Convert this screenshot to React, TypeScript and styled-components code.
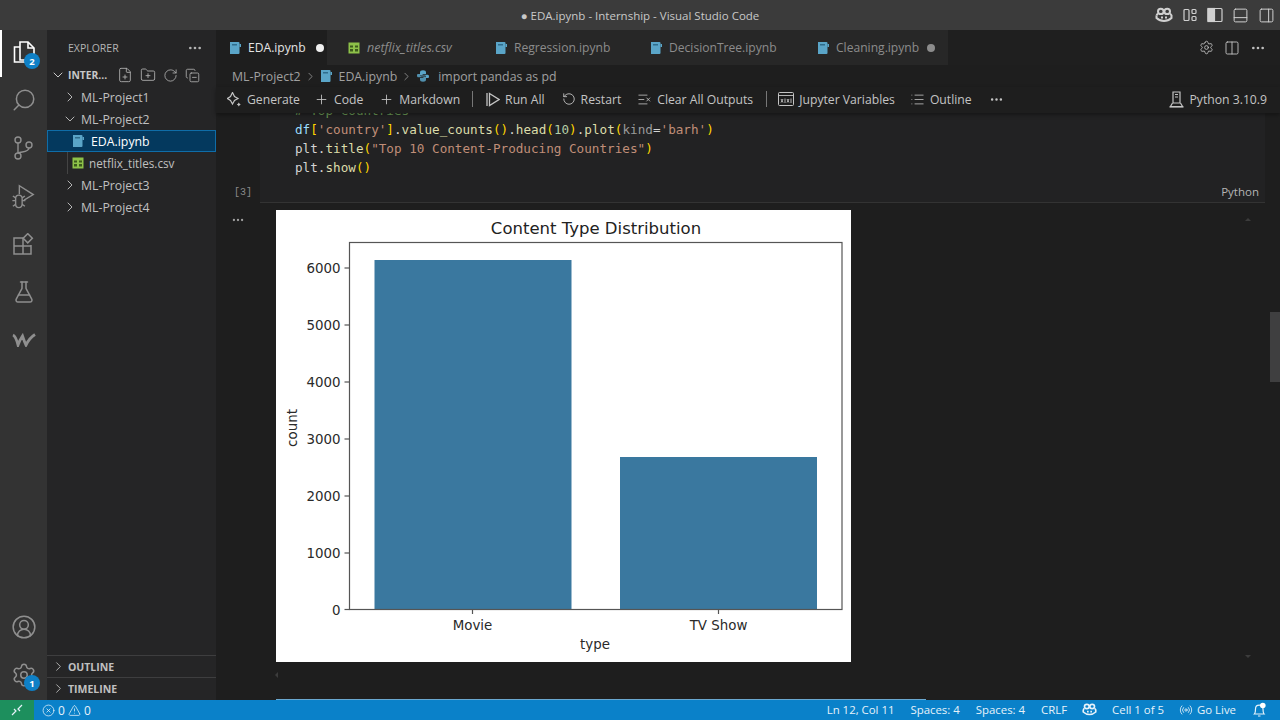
import React from 'react';
import styled, { createGlobalStyle } from 'styled-components';
import {
  ChevronDown,
  ChevronRight,
  CircleUserRound,
  Columns2,
  CopyMinus,
  FilePlus,
  FlaskConical,
  FolderPlus,
  List,
  ListX,
  MoreHorizontal,
  PanelBottom,
  PanelRight,
  Plus,
  Radio,
  RotateCcw,
  RotateCw,
  Search,
  Settings,
  TriangleAlert,
  CircleX,
} from 'lucide-react';

const GlobalStyle = createGlobalStyle`
  html, body {
    margin: 0;
    padding: 0;
    background: #1e1e1e;
    overflow: hidden;
  }
  * {
    box-sizing: border-box;
  }
`;

const Window = styled.div`
  width: 1280px;
  height: 720px;
  display: flex;
  flex-direction: column;
  font-family: 'Open Sans', 'Noto Sans', sans-serif;
  font-size: 12.3px;
  color: #ccc;
  overflow: hidden;
`;

const TitleBar = styled.div`
  height: 30px;
  flex-shrink: 0;
  background: #3b3b3b;
  position: relative;
  display: flex;
  align-items: center;
  justify-content: flex-end;
  gap: 7.5px;
  padding-right: 5px;
  color: #d0d0d0;
`;

const TitleText = styled.div`
  position: absolute;
  left: 0;
  right: 0;
  text-align: center;
  font-size: 11.5px;
  color: #c8c8c8;
`;

const TitleIcon = styled.span`
  width: 18px;
  height: 18px;
  display: flex;
  align-items: center;
  justify-content: center;
`;

const Main = styled.div`
  flex: 1;
  display: flex;
  min-height: 0;
`;

const ActivityBar = styled.div`
  width: 47px;
  flex-shrink: 0;
  background: #333333;
  display: flex;
  flex-direction: column;
  gap: 4px;
  padding-bottom: 3px;
  color: #8f8f8f;
`;

const ActivitySpacer = styled.div`
  flex: 1;
`;

const ActivityItem = styled.div<{ $active?: boolean }>`
  height: 44px;
  position: relative;
  display: flex;
  align-items: center;
  justify-content: center;
  color: ${(p) => (p.$active ? '#ffffff' : 'inherit')};

  &::before {
    content: '';
    display: ${(p) => (p.$active ? 'block' : 'none')};
    position: absolute;
    left: 0;
    top: 0;
    bottom: -3px;
    width: 2px;
    background: #fff;
  }
`;

const Badge = styled.span`
  position: absolute;
  left: 24px;
  top: 23px;
  width: 16px;
  height: 16px;
  border-radius: 50%;
  background: #0f80c6;
  color: #fff;
  font-size: 9.5px;
  font-weight: 700;
  display: flex;
  align-items: center;
  justify-content: center;
`;

const BottomBadge = styled(Badge)`
  top: 22px;
`;

const Sidebar = styled.div`
  width: 169px;
  flex-shrink: 0;
  background: #252526;
  display: flex;
  flex-direction: column;
  padding-bottom: 1px;
`;

const SidebarHeader = styled.div`
  height: 35px;
  display: flex;
  align-items: center;
  justify-content: space-between;
  padding: 0 13px 0 21px;
  font-size: 10.5px;
  color: #b4b4b4;
`;

const WorkspaceRow = styled.div`
  height: 22px;
  margin-top: -1px;
  display: flex;
  align-items: center;
  padding-left: 3px;
  color: #c8c8c8;
`;

const WorkspaceName = styled.span`
  font-size: 10.3px;
  font-weight: 700;
  margin-left: 2px;
  width: 49px;
`;

const WorkspaceActions = styled.div`
  display: flex;
  align-items: center;
  gap: 7px;
  color: #b4b4b4;
`;

const TreeRow = styled.div<{ $selected?: boolean; $indent: number; $gap?: number }>`
  height: 22px;
  display: flex;
  align-items: center;
  position: relative;
  padding-left: ${(p) => p.$indent}px;
  gap: ${(p) => p.$gap ?? 3}px;
  color: ${(p) => (p.$selected ? '#ffffff' : '#c0c0c0')};
  background: ${(p) => (p.$selected ? '#04395e' : 'transparent')};
  border: 1px solid ${(p) => (p.$selected ? '#0f6da8' : 'transparent')};
  border-width: ${(p) => (p.$selected ? 1 : 0)}px;
`;

const TreeFileName = styled.span<{ $narrow?: boolean }>`
  font-size: ${(p) => (p.$narrow ? 11.7 : 12.3)}px;
`;

const IndentGuide = styled.span`
  position: absolute;
  left: 20px;
  top: 0;
  bottom: 0;
  width: 1px;
  background: #444;
`;

const SidebarFill = styled.div`
  flex: 1;
`;

const SectionHeader = styled.div`
  height: 22px;
  border-top: 1px solid #3e3e3f;
  display: flex;
  align-items: center;
  gap: 2px;
  padding-left: 4px;
  font-size: 10.5px;
  font-weight: 700;
  color: #c0c0c0;
`;

const Editor = styled.div`
  flex: 1;
  min-width: 0;
  background: #1e1e1e;
  display: flex;
  flex-direction: column;
  position: relative;
`;

const TabStrip = styled.div`
  height: 35px;
  flex-shrink: 0;
  display: flex;
  background: #1f1f1f;
`;

const Tab = styled.div<{ $active?: boolean; $width: number; $pad: number }>`
  width: ${(p) => p.$width}px;
  padding-left: ${(p) => p.$pad}px;
  display: flex;
  align-items: center;
  gap: 7px;
  background: ${(p) => (p.$active ? '#1e1e1e' : '#272727')};
  color: ${(p) => (p.$active ? '#e4e4e4' : '#8c8c8c')};
`;

const TabLabel = styled.span<{ $italic?: boolean }>`
  font-size: ${(p) => (p.$italic ? 12.5 : 12.1)}px;
  font-style: ${(p) => (p.$italic ? 'italic' : 'normal')};
`;

const Dirty = styled.span<{ $active?: boolean }>`
  width: 8px;
  height: 8px;
  margin-left: ${(p) => (p.$active ? 3 : 1)}px;
  border-radius: 50%;
  background: ${(p) => (p.$active ? '#f0f0f0' : '#8c8c8c')};
`;

const TabActions = styled.div`
  margin-left: auto;
  display: flex;
  align-items: center;
  gap: 10px;
  padding-right: 14px;
  color: #c0c0c0;
`;

const Breadcrumb = styled.div`
  height: 22px;
  flex-shrink: 0;
  display: flex;
  align-items: center;
  gap: 3px;
  padding-left: 16px;
  color: #a0a0a0;
  background: #1e1e1e;
`;

const CrumbText = styled.span<{ $left?: number }>`
  margin-left: ${(p) => p.$left ?? 0}px;
  font-size: 12.3px;
`;

const Toolbar = styled.div`
  height: 26px;
  flex-shrink: 0;
  display: flex;
  align-items: center;
  padding: 0 13px 2px 11px;
  font-size: 12.2px;
  background: #1e1e1e;
  color: #c4c4c4;
  box-shadow: 0 2px 4px rgba(0, 0, 0, 0.35);
  position: relative;
  z-index: 1;
`;

const ToolItem = styled.div<{ $left?: number }>`
  display: flex;
  align-items: center;
  gap: 5px;
  margin-left: ${(p) => p.$left ?? 0}px;
  white-space: nowrap;
`;

const ToolSeparator = styled.span<{ $left: number }>`
  width: 1px;
  height: 16px;
  margin-left: ${(p) => p.$left}px;
  background: #777;
`;

const ToolSpacer = styled.div`
  flex: 1;
`;

const Notebook = styled.div`
  flex: 1;
  min-height: 0;
  position: relative;
  display: flex;
  flex-direction: column;
`;

const CellRow = styled.div`
  height: 90px;
  flex-shrink: 0;
  display: flex;
`;

const CellGutter = styled.div`
  width: 44px;
  flex-shrink: 0;
  display: flex;
  align-items: flex-end;
  justify-content: flex-end;
  padding: 0 8px 5px 0;
  font-family: 'Liberation Mono', monospace;
  font-size: 10px;
  color: #8a8a8a;
`;

const CellBody = styled.div`
  width: 1005px;
  flex-shrink: 0;
  background: #222223;
  border-bottom: 1px solid #333;
  position: relative;
  display: flex;
  flex-direction: column;
  justify-content: flex-end;
  overflow: hidden;
  padding: 0 0 25px 35px;
`;

const CodeLine = styled.div`
  height: 19px;
  flex-shrink: 0;
  line-height: 19px;
  font-family: 'DejaVu Sans Mono', 'Liberation Mono', monospace;
  font-size: 12.65px;
  white-space: pre;
  color: #d4d4d4;
`;

const Tok = styled.span<{ $c: string }>`
  color: ${(p) => p.$c};
`;

const CellLanguage = styled.span`
  position: absolute;
  right: 6px;
  bottom: 3px;
  font-size: 11.5px;
  color: #b4b4b4;
`;

const OutputRow = styled.div`
  display: flex;
  padding-top: 7px;
`;

const OutputGutter = styled.div`
  width: 60px;
  flex-shrink: 0;
  padding: 3px 0 0 15px;
  color: #a0a0a0;
  display: flex;
  align-items: flex-start;
`;

const ChartFrame = styled.div`
  width: 575px;
  height: 452px;
  background: #fff;
`;

const ChartSvg = styled.svg`
  display: block;
  font-family: 'DejaVu Sans', sans-serif;
`;

const ScrollSlider = styled.div`
  position: absolute;
  right: 0;
  top: 199px;
  width: 10px;
  height: 70px;
  background: #3f3f40;
`;

const ScrollArrow = styled.span<{ $dir: 'up' | 'down' | 'left' }>`
  position: absolute;
  width: 0;
  height: 0;
  ${(p) =>
    p.$dir === 'left'
      ? `left: 59px; bottom: 22px; border-top: 3px solid transparent; border-bottom: 3px solid transparent; border-right: 3px solid #3c3c3c;`
      : p.$dir === 'up'
        ? `right: 29px; top: 105px; border-left: 3px solid transparent; border-right: 3px solid transparent; border-bottom: 3px solid #3c3c3c;`
        : `right: 29px; bottom: 42px; border-left: 3px solid transparent; border-right: 3px solid transparent; border-top: 3px solid #3c3c3c;`}
`;

const HorizontalThumb = styled.div`
  position: absolute;
  left: 60px;
  bottom: 0;
  width: 650px;
  height: 1px;
  background: #6aa8d0;
`;

const StatusBar = styled.div`
  height: 20px;
  flex-shrink: 0;
  background: #0a81c9;
  color: #e6f2fa;
  display: flex;
  align-items: center;
  font-size: 11.4px;
  padding-right: 13px;
`;

const RemoteButton = styled.div`
  width: 34px;
  height: 100%;
  background: #1d8f5d;
  display: flex;
  align-items: center;
  justify-content: center;
`;

const StatusGroup = styled.div`
  display: flex;
  align-items: center;
  gap: 3px;
  margin-left: 8px;
  font-size: 12px;
`;

const StatusSpacer = styled.div`
  flex: 1;
`;

const StatusItem = styled.span<{ $left: number }>`
  display: flex;
  align-items: center;
  gap: 4px;
  margin: -1px 0 0 ${(p) => p.$left}px;
  white-space: nowrap;
`;

const NotebookIcon = () => (
  <svg width="12" height="14" viewBox="0 0 12 14">
    <path d="M1 1h8.5a1 1 0 0 1 1 1v10a1 1 0 0 1-1 1H1z" fill="#5aa5c8" />
    <rect x="10.5" y="3" width="1.5" height="3" fill="#5aa5c8" />
    <rect x="3" y="3" width="5" height="1.5" fill="#2f6d8c" />
  </svg>
);

const CsvIcon = () => (
  <svg width="12" height="12" viewBox="0 0 12 12">
    <rect x="0.5" y="0.5" width="11" height="11" fill="#8dc149" />
    <path d="M2 3.5h3v2H2zM7 3.5h3v2H7zM2 7h3v2.5H2zM7 7h3v2.5H7z" fill="#3c5a1c" />
  </svg>
);

const PythonIcon = () => (
  <svg width="14" height="14" viewBox="0 0 14 14" fill="#5aa5c8">
    <path d="M4 6V3.2C4 2 5 1.2 7 1.2S10 2 10 3.2V5H6.6V5.7H11.6C12.6 5.7 13 6.4 13 7.5S12.6 9 11.6 9H10V8C10 7 9.4 6.6 8.5 6.6H5.2C4.5 6.6 4 6.4 4 6Z" />
    <path d="M10 8V10.8C10 12 9 12.8 7 12.8S4 12 4 10.8V9H7.4V8.3H2.4C1.4 8.3 1 7.6 1 6.5S1.4 5 2.4 5H4V6C4 7 4.6 7.4 5.5 7.4H8.8C9.5 7.4 10 7.6 10 8Z" opacity="0.85" />
  </svg>
);

const CopilotIcon = ({ size = 18 }: { size?: number }) => (
  <svg width={size} height={size} viewBox="0 0 18 18" fill="none" stroke="currentColor" strokeWidth="2">
    <path d="M1.5 9.5V12c2.2 2 5 3 7.5 3s5.3-1 7.5-3V9.5C16 8.5 15.5 8 15 8" />
    <path d="M3 8c-.7 0-1.2.5-1.5 1.5" />
    <ellipse cx="5.8" cy="5.4" rx="2.8" ry="2.6" />
    <ellipse cx="12.2" cy="5.4" rx="2.8" ry="2.6" />
    <path d="M7 10.5v2M11 10.5v2" />
  </svg>
);

const LayoutIcon = () => (
  <svg width="16" height="16" viewBox="0 0 16 16" fill="none" stroke="currentColor" strokeWidth="1.2">
    <rect x="2" y="2.5" width="5" height="11" rx="1" />
    <rect x="10" y="2.5" width="4" height="4" rx="1" />
    <rect x="10" y="9.5" width="4" height="4" rx="1" />
  </svg>
);

const SidePanelIcon = () => (
  <svg width="16" height="16" viewBox="0 0 16 16" fill="none" stroke="currentColor" strokeWidth="1.2">
    <rect x="1" y="1.5" width="14" height="13" rx="1" />
    <rect x="1" y="1.5" width="6.5" height="13" fill="currentColor" />
  </svg>
);

const SparkleIcon = () => (
  <svg width="15" height="15" viewBox="0 0 15 15" fill="none" stroke="currentColor" strokeWidth="1.2">
    <path d="M5.5 .5 7.500 4.500l3.500 2-3.500 2-2 3.500-2-3.500L.5 6.500l3-2z" />
    <path d="M11.8 10.500l.8 1.200 1.200.8-1.200.8-.8 1.200-.8-1.200-1.200-.8 1.200-.8z" fill="currentColor" stroke="none" />
  </svg>
);

const RunAllIcon = () => (
  <svg width="14" height="15" viewBox="0 0 14 15" fill="none" stroke="currentColor" strokeWidth="1.3">
    <path d="M1 1v13" />
    <path d="M3.5 1.5 13 7.5l-9.500 6z" />
  </svg>
);

const FilesIcon = () => (
  <svg width="28" height="28" viewBox="0 0 28 28" fill="none" stroke="currentColor" strokeWidth="1.6">
    <path d="M10 4h8l6 6v12H10z" />
    <path d="M18 4v6h6" />
    <path d="M10 9H4.5v15H18v-2" />
  </svg>
);

const GitIcon = () => (
  <svg width="24" height="24" viewBox="0 0 24 24" fill="none" stroke="currentColor" strokeWidth="1.4">
    <circle cx="6" cy="4" r="3" />
    <circle cx="6" cy="20" r="3" />
    <circle cx="17" cy="9" r="3" />
    <path d="M6 7v10M17 12c0 4-7 3.5-11 5" />
  </svg>
);

const DebugIcon = () => (
  <svg width="26" height="26" viewBox="0 0 28 28" fill="none" stroke="currentColor" strokeWidth="1.5">
    <path d="M9 12V3l15 9.5-10 6" />
    <path d="M5 16.5a3.500 3.500 0 0 1 7 0V23a3.500 3.500 0 0 1-7 0z" />
    <path d="M5 19H1.5M12 19h3.500M5 23l-3 2M12 23l3 2M5 16l-3-2M12 16l3-2" />
  </svg>
);

const ExtensionsIcon = () => (
  <svg width="22" height="22" viewBox="0 0 22 22" fill="none" stroke="currentColor" strokeWidth="1.5">
    <path d="M1 5h9v16H1zM1 13h17v8h-8M18 13v-1" />
    <rect x="11.5" y="2" width="6.5" height="6.5" transform="rotate(45 14.75 5.25)" />
  </svg>
);

const WaveLogo = () => (
  <svg width="24" height="14" viewBox="0 0 24 14" fill="none" stroke="currentColor" strokeWidth="2.8">
    <path d="M1 2c2.5 1 3.500 4 5 10 1-3 2.500-6 4.500-9 1 3 2 6 3.500 9 2-4 5-8 9-10.500" />
  </svg>
);

const VariablesIcon = () => (
  <svg width="16" height="14" viewBox="0 0 16 14" fill="none" stroke="currentColor" strokeWidth="1">
    <rect x="0.5" y="0.5" width="15" height="13" rx="1" />
    <path d="M1 3.5h14M3 7l2 3.500M5 7l-2 3.500M7 6.5v4.500M9 7l2 3.500M11 7l-2 3.500M13 6.5v4.500" strokeWidth="0.9" />
  </svg>
);

const KernelIcon = () => (
  <svg width="15" height="17" viewBox="0 0 15 17" fill="none" stroke="currentColor" strokeWidth="1.2">
    <path d="M4 1h7v11H4zM6 3.5h3M6 6h3" />
    <path d="M3.5 12 1.5 15.5h12L11.5 12" />
    <path d="M.5 16h14" />
  </svg>
);

const RemoteIcon = () => (
  <svg width="14" height="14" viewBox="0 0 14 14" fill="none" stroke="currentColor" strokeWidth="1.2">
    <path d="M2 12l4-4-2-2" />
    <path d="M12 2 8 6l2 2" />
  </svg>
);

const BellDot = () => (
  <svg width="15" height="16" viewBox="0 0 15 16" fill="none" stroke="currentColor" strokeWidth="1.2">
    <path d="M2.5 12h9.500c-1-1-1-2.500-1-5 0-2.200-1.600-3.800-3.700-3.800S3.500 4.800 3.500 7c0 2.500 0 4-1 5zM6 14h2.500" />
    <circle cx="10.8" cy="3.5" r="2.8" fill="#fff" stroke="none" />
  </svg>
);

const ticks = [
  { label: '6000', y: 58 },
  { label: '5000', y: 115 },
  { label: '4000', y: 172 },
  { label: '3000', y: 229 },
  { label: '2000', y: 286 },
  { label: '1000', y: 343 },
  { label: '0', y: 399.5 },
];

const ContentTypeChart = () => (
  <ChartSvg width="575" height="452" viewBox="0 0 575 452">
    <text x="320" y="24" textAnchor="middle" fontSize="16.5" fill="#222">
      Content Type Distribution
    </text>
    <rect x="98.5" y="50" width="197" height="349.5" fill="#3a789f" />
    <rect x="344" y="247" width="197" height="152.5" fill="#3a789f" />
    <rect x="73.5" y="32.5" width="492.5" height="367" fill="none" stroke="#555" strokeWidth="1.2" />
    {ticks.map((t) => (
      <g key={t.label}>
        <line x1="68.5" x2="73.5" y1={t.y} y2={t.y} stroke="#555" strokeWidth="1.2" />
        <text x="64.5" y={t.y + 5} textAnchor="end" fontSize="13.4" fill="#2a2a2a">
          {t.label}
        </text>
      </g>
    ))}
    <line x1="196.5" x2="196.5" y1="399.5" y2="404" stroke="#555" strokeWidth="1.2" />
    <line x1="442.5" x2="442.5" y1="399.5" y2="404" stroke="#555" strokeWidth="1.2" />
    <text x="196.5" y="420" textAnchor="middle" fontSize="13.4" fill="#2a2a2a">
      Movie
    </text>
    <text x="442.5" y="420" textAnchor="middle" fontSize="13.4" fill="#2a2a2a">
      TV Show
    </text>
    <text x="319" y="439" textAnchor="middle" fontSize="13.4" fill="#2a2a2a">
      type
    </text>
    <text x="21" y="218" textAnchor="middle" fontSize="13.4" fill="#2a2a2a" transform="rotate(-90 21 218)">
      count
    </text>
  </ChartSvg>
);

const str = '#c08e78';
const fn = '#dcdcaa';
const br = '#ffd700';

const App: React.FC = () => {
  return (
    <>
      <GlobalStyle />
      <Window>
        <TitleBar>
          <TitleText>● EDA.ipynb - Internship - Visual Studio Code</TitleText>
          <TitleIcon><CopilotIcon /></TitleIcon>
          <TitleIcon><LayoutIcon /></TitleIcon>
          <TitleIcon><SidePanelIcon /></TitleIcon>
          <TitleIcon><PanelBottom size={17} strokeWidth={1.4} /></TitleIcon>
          <TitleIcon><PanelRight size={17} strokeWidth={1.4} /></TitleIcon>
        </TitleBar>
        <Main>
          <ActivityBar>
            <ActivityItem $active>
              <FilesIcon />
              <Badge>2</Badge>
            </ActivityItem>
            <ActivityItem><Search size={26} strokeWidth={1.4} style={{ transform: 'scaleX(-1)' }} /></ActivityItem>
            <ActivityItem><GitIcon /></ActivityItem>
            <ActivityItem><DebugIcon /></ActivityItem>
            <ActivityItem><ExtensionsIcon /></ActivityItem>
            <ActivityItem><FlaskConical size={24} strokeWidth={1.5} /></ActivityItem>
            <ActivityItem><WaveLogo /></ActivityItem>
            <ActivitySpacer />
            <ActivityItem><CircleUserRound size={26} strokeWidth={1.4} /></ActivityItem>
            <ActivityItem>
              <Settings size={26} strokeWidth={1.4} />
              <BottomBadge>1</BottomBadge>
            </ActivityItem>
          </ActivityBar>

          <Sidebar>
            <SidebarHeader>
              <span>EXPLORER</span>
              <MoreHorizontal size={16} />
            </SidebarHeader>
            <WorkspaceRow>
              <ChevronDown size={16} strokeWidth={1.5} />
              <WorkspaceName>INTER...</WorkspaceName>
              <WorkspaceActions>
                <FilePlus size={16} strokeWidth={1.3} />
                <FolderPlus size={16} strokeWidth={1.3} />
                <RotateCw size={15} strokeWidth={1.3} />
                <CopyMinus size={15} strokeWidth={1.3} />
              </WorkspaceActions>
            </WorkspaceRow>
            <TreeRow $indent={15}><ChevronRight size={16} strokeWidth={1.4} />ML-Project1</TreeRow>
            <TreeRow $indent={15}><ChevronDown size={16} strokeWidth={1.4} />ML-Project2</TreeRow>
            <TreeRow $indent={24} $gap={7} $selected><NotebookIcon /><TreeFileName>EDA.ipynb</TreeFileName></TreeRow>
            <TreeRow $indent={25} $gap={5}><IndentGuide /><CsvIcon /><TreeFileName $narrow>netflix_titles.csv</TreeFileName></TreeRow>
            <TreeRow $indent={15}><ChevronRight size={16} strokeWidth={1.4} />ML-Project3</TreeRow>
            <TreeRow $indent={15}><ChevronRight size={16} strokeWidth={1.4} />ML-Project4</TreeRow>
            <SidebarFill />
            <SectionHeader><ChevronRight size={15} strokeWidth={1.4} />OUTLINE</SectionHeader>
            <SectionHeader><ChevronRight size={15} strokeWidth={1.4} />TIMELINE</SectionHeader>
          </Sidebar>

          <Editor>
            <TabStrip>
              <Tab $active $width={111} $pad={13}>
                <NotebookIcon />
                <TabLabel>EDA.ipynb</TabLabel>
                <Dirty $active />
              </Tab>
              <Tab $width={146} $pad={21}>
                <CsvIcon />
                <TabLabel $italic>netflix_titles.csv</TabLabel>
              </Tab>
              <Tab $width={155} $pad={22}>
                <NotebookIcon />
                <TabLabel>Regression.ipynb</TabLabel>
              </Tab>
              <Tab $width={167} $pad={22}>
                <NotebookIcon />
                <TabLabel>DecisionTree.ipynb</TabLabel>
              </Tab>
              <Tab $width={153} $pad={22}>
                <NotebookIcon />
                <TabLabel>Cleaning.ipynb</TabLabel>
                <Dirty />
              </Tab>
              <TabActions>
                <Settings size={15} strokeWidth={1.4} />
                <Columns2 size={16} strokeWidth={1.4} />
                <MoreHorizontal size={16} />
              </TabActions>
            </TabStrip>

            <Breadcrumb>
              <CrumbText>ML-Project2</CrumbText>
              <ChevronRight size={13} strokeWidth={1.4} />
              <NotebookIcon />
              <CrumbText $left={4}>EDA.ipynb</CrumbText>
              <ChevronRight size={13} strokeWidth={1.4} />
              <PythonIcon />
              <CrumbText $left={5}>import pandas as pd</CrumbText>
            </Breadcrumb>

            <Toolbar>
              <ToolItem><SparkleIcon />Generate</ToolItem>
              <ToolItem $left={14}><Plus size={15} strokeWidth={1.4} />Code</ToolItem>
              <ToolItem $left={16}><Plus size={15} strokeWidth={1.4} />Markdown</ToolItem>
              <ToolSeparator $left={12} />
              <ToolItem $left={13}><RunAllIcon />Run All</ToolItem>
              <ToolItem $left={17}><RotateCcw size={14} strokeWidth={1.5} />Restart</ToolItem>
              <ToolItem $left={16}><ListX size={15} strokeWidth={1.3} />Clear All Outputs</ToolItem>
              <ToolSeparator $left={13} />
              <ToolItem $left={11}><VariablesIcon />Jupyter Variables</ToolItem>
              <ToolItem $left={15}><List size={15} strokeWidth={1.3} />Outline</ToolItem>
              <ToolItem $left={17}><MoreHorizontal size={15} /></ToolItem>
              <ToolSpacer />
              <ToolItem><KernelIcon />Python 3.10.9</ToolItem>
            </Toolbar>

            <Notebook>
              <CellRow>
                <CellGutter>[3]</CellGutter>
                <CellBody>
                  <CodeLine><Tok $c="#6a9955"># Top countries</Tok></CodeLine>
                  <CodeLine>
                    <Tok $c="#9cdcfe">df</Tok><Tok $c={br}>[</Tok><Tok $c={str}>'country'</Tok><Tok $c={br}>]</Tok>.<Tok $c={fn}>value_counts</Tok><Tok $c={br}>()</Tok>.<Tok $c={fn}>head</Tok><Tok $c={br}>(</Tok><Tok $c="#b5cea8">10</Tok><Tok $c={br}>)</Tok>.<Tok $c={fn}>plot</Tok><Tok $c={br}>(</Tok><Tok $c="#9a9a9a">kind</Tok>=<Tok $c={str}>'barh'</Tok><Tok $c={br}>)</Tok>
                  </CodeLine>
                  <CodeLine>
                    plt.<Tok $c={fn}>title</Tok><Tok $c={br}>(</Tok><Tok $c={str}>"Top 10 Content-Producing Countries"</Tok><Tok $c={br}>)</Tok>
                  </CodeLine>
                  <CodeLine>
                    plt.<Tok $c={fn}>show</Tok><Tok $c={br}>()</Tok>
                  </CodeLine>
                  <CellLanguage>Python</CellLanguage>
                </CellBody>
              </CellRow>
              <OutputRow>
                <OutputGutter><MoreHorizontal size={14} /></OutputGutter>
                <ChartFrame><ContentTypeChart /></ChartFrame>
              </OutputRow>
              <ScrollSlider />
              <ScrollArrow $dir="up" />
              <ScrollArrow $dir="down" />
              <ScrollArrow $dir="left" />
              <HorizontalThumb />
            </Notebook>
          </Editor>
        </Main>
        <StatusBar>
          <RemoteButton><RemoteIcon /></RemoteButton>
          <StatusGroup>
            <CircleX size={13} strokeWidth={1.4} />0
            <TriangleAlert size={13} strokeWidth={1.4} />0
          </StatusGroup>
          <StatusSpacer />
          <StatusItem $left={16}>Ln 12, Col 11</StatusItem>
          <StatusItem $left={16}>Spaces: 4</StatusItem>
          <StatusItem $left={16}>Spaces: 4</StatusItem>
          <StatusItem $left={16}>CRLF</StatusItem>
          <StatusItem $left={15}><CopilotIcon size={15} /></StatusItem>
          <StatusItem $left={15}>Cell 1 of 5</StatusItem>
          <StatusItem $left={15}><Radio size={14} strokeWidth={1.4} />Go Live</StatusItem>
          <StatusItem $left={16}>
            <BellDot />
          </StatusItem>
        </StatusBar>
      </Window>
    </>
  );
};

export default App;
